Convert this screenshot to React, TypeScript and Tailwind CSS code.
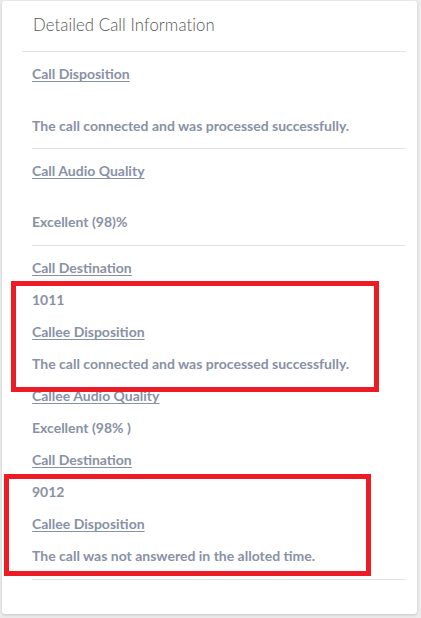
import React from "react";

const Label = ({ children }: { children: React.ReactNode }) => (
  <div className="h-5 leading-5 text-[14px] font-bold text-[#8891a5] underline underline-offset-2 decoration-1">
    {children}
  </div>
);

const Value = ({ children }: { children: React.ReactNode }) => (
  <div className="h-5 leading-5 text-[14px] font-bold text-[#8891a5]">{children}</div>
);

export default function App() {
  return (
    <div
      className="relative w-[421px] h-[618px] bg-[#ededed] overflow-hidden"
      style={{ fontFamily: "Lato, 'Noto Sans', sans-serif" }}
    >
      <div className="ml-[2px] mt-[1px] w-[415px] h-[613px] bg-white rounded-[3px] shadow-[0_1px_3px_rgba(0,0,0,0.18)] flex flex-col">
        <div className="ml-[20px] mr-[11px] h-[51px] border-b border-[#e3e3e3] flex items-center pl-[11px] pb-[1px]">
          <span className="text-[16.7px] font-light text-[#555555] tracking-[0.1px]">Detailed Call Information</span>
        </div>
        <div className="ml-[30px] mr-[12px] flex flex-col">
          <div className="pt-3 pb-3 border-b border-[#e3e3e3] flex flex-col gap-8">
            <Label>Call Disposition</Label>
            <Value>The call connected and was processed successfully.</Value>
          </div>
          <div className="pt-3 pb-[13px] border-b border-[#e3e3e3] flex flex-col gap-[31px]">
            <Label>Call Audio Quality</Label>
            <Value>Excellent (98)%</Value>
          </div>
          <div className="pt-3 pb-[13px] border-b border-[#e3e3e3] flex flex-col gap-3">
            <Label>Call Destination</Label>
            <Value>1011</Value>
            <Label>Callee Disposition</Label>
            <Value>The call connected and was processed successfully.</Value>
            <Label>Callee Audio Quality</Label>
            <Value>Excellent (98% )</Value>
            <Label>Call Destination</Label>
            <Value>9012</Value>
            <Label>Callee Disposition</Label>
            <Value>The call was not answered in the alloted time.</Value>
          </div>
        </div>
      </div>
      <div className="absolute left-[11px] top-[281px] w-[368px] h-[111px] border-[5px] border-[#ed1c24]" />
      <div className="absolute left-[4px] top-[474px] w-[367px] h-[102px] border-[5px] border-[#ed1c24]" />
    </div>
  );
}
